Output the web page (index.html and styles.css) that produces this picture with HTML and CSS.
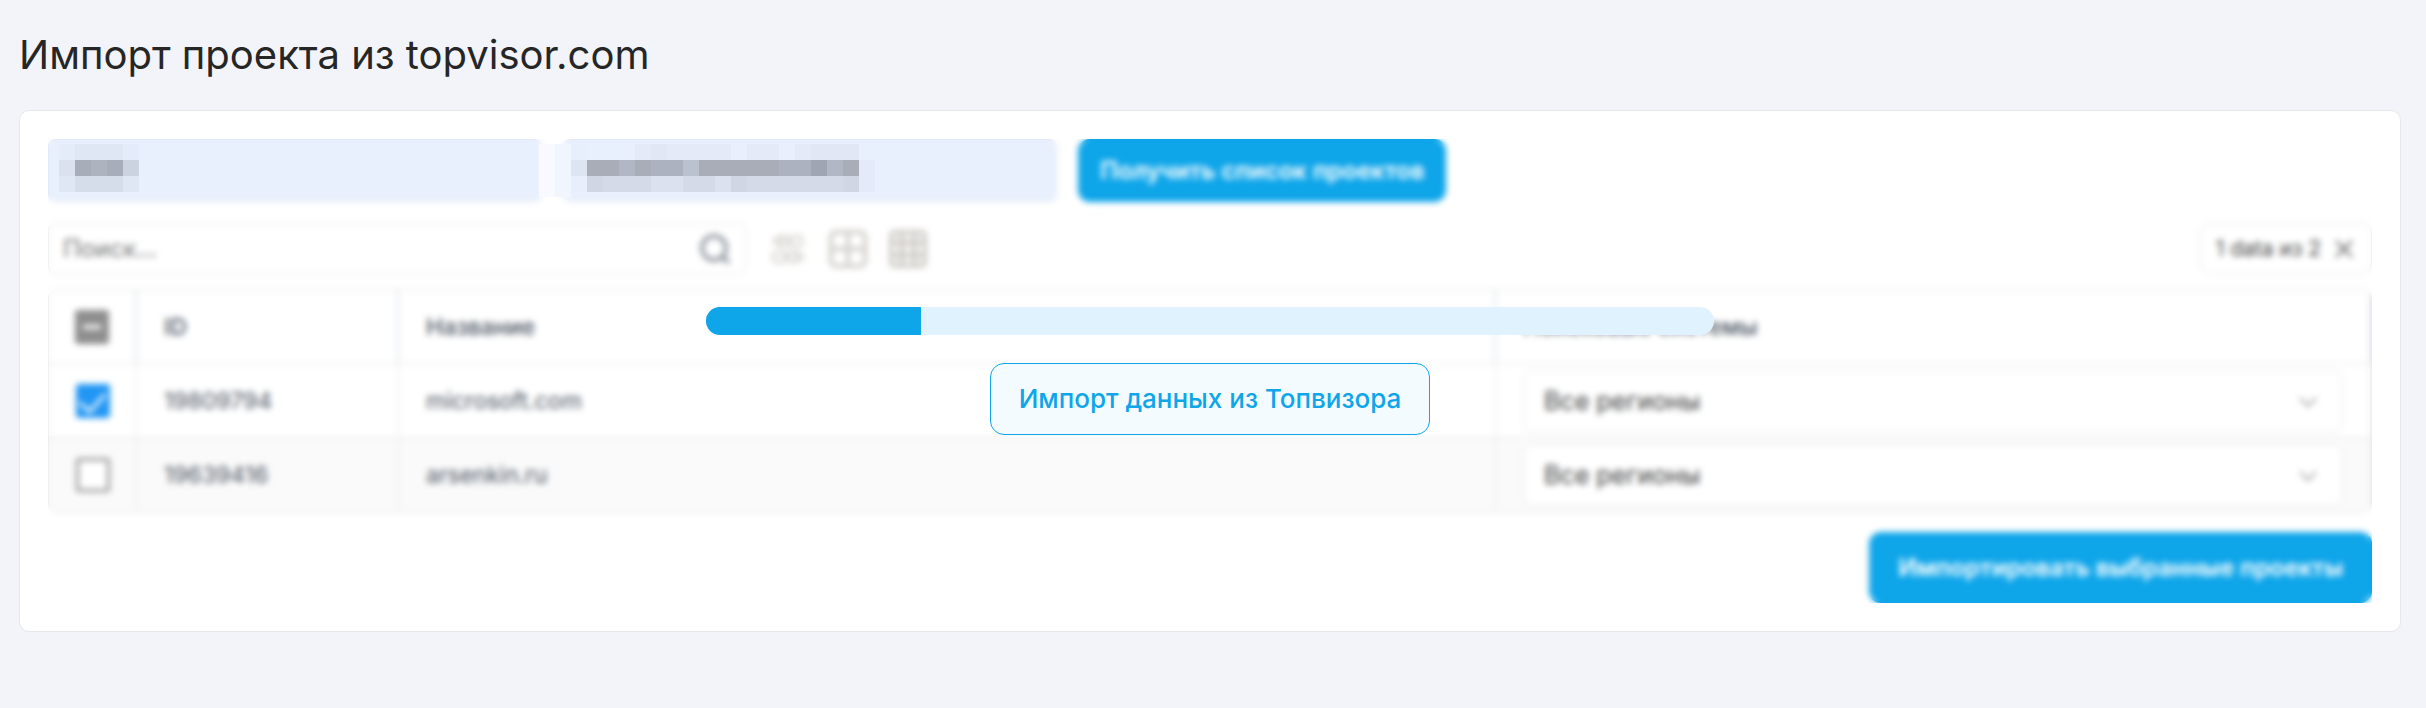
FILE: index.html
```html
<!DOCTYPE html>
<html lang="ru">
<head>
    <meta charset="UTF-8">
    <meta name="viewport" content="width=device-width, initial-scale=1.0">
    <title>Импорт проекта</title>
    <link rel="stylesheet" href="styles.css">
</head>
<body>
    <h1>Импорт проекта из topvisor.com</h1>

    <main class="card">
        <div class="content">
            <form class="access">
                <input type="text" class="field" aria-label="ID пользователя">
                <input type="text" class="field" aria-label="API ключ">
                <button type="button" class="btn">Получить список проектов</button>
            </form>

            <div class="toolbar">
                <div class="search">
                    <input type="text" placeholder="Поиск..." aria-label="Поиск">
                    <svg width="32" height="32" viewBox="0 0 32 32" fill="none" stroke="#9299a3" stroke-width="4"><circle cx="15" cy="15" r="12"/><path d="M23 23l7 7"/></svg>
                </div>
                <button type="button" class="icon" aria-label="Список">
                    <svg width="38" height="38" viewBox="0 0 38 38" fill="none" stroke="#d8d5d0" stroke-width="3"><path d="M11 6l-6 5 6 5M28 22l6 5-6 5"/><rect x="12" y="6" width="7" height="10" rx="3"/><rect x="22" y="6" width="11" height="10" rx="4"/><rect x="4" y="22" width="12" height="10" rx="4"/><rect x="19" y="22" width="8" height="10" rx="3"/></svg>
                </button>
                <button type="button" class="icon" aria-label="Крупная сетка">
                    <svg width="38" height="38" viewBox="0 0 38 38" fill="none" stroke="#d0cdc8" stroke-width="4"><rect x="2" y="2" width="34" height="34" rx="5"/><path d="M19 2v34M2 19h34"/></svg>
                </button>
                <button type="button" class="icon" aria-label="Мелкая сетка">
                    <svg width="38" height="38" viewBox="0 0 38 38" fill="none" stroke="#d0cdc8" stroke-width="5"><rect x="2" y="2" width="34" height="34" rx="5"/><path d="M13 2v34M25 2v34M2 13h34M2 25h34"/></svg>
                </button>
                <button type="button" class="counter">
                    1 data из 2
                    <svg width="18" height="18" viewBox="0 0 18 18" stroke="#555" stroke-width="2"><path d="M1 1l16 16M17 1L1 17"/></svg>
                </button>
            </div>

            <div class="table-wrap">
                <table>
                    <colgroup>
                        <col class="col-check">
                        <col class="col-id">
                        <col class="col-name">
                        <col>
                    </colgroup>
                    <thead>
                        <tr>
                            <th class="check"><input type="checkbox" class="partial" aria-label="Выбрать все"></th>
                            <th>ID</th>
                            <th>Название</th>
                            <th>Поисковые системы</th>
                        </tr>
                    </thead>
                    <tbody>
                        <tr>
                            <td class="check"><input type="checkbox" checked aria-label="microsoft.com"></td>
                            <td>19809794</td>
                            <td>microsoft.com</td>
                            <td>
                                <div class="select">
                                    <select aria-label="Регионы microsoft.com"><option>Все регионы</option></select>
                                    <svg width="18" height="12" viewBox="0 0 18 12" fill="none" stroke="#a0a0a0" stroke-width="2"><path d="M1 2l8 8 8-8"/></svg>
                                </div>
                            </td>
                        </tr>
                        <tr>
                            <td class="check"><input type="checkbox" aria-label="arsenkin.ru"></td>
                            <td>19639416</td>
                            <td>arsenkin.ru</td>
                            <td>
                                <div class="select">
                                    <select aria-label="Регионы arsenkin.ru"><option>Все регионы</option></select>
                                    <svg width="18" height="12" viewBox="0 0 18 12" fill="none" stroke="#a0a0a0" stroke-width="2"><path d="M1 2l8 8 8-8"/></svg>
                                </div>
                            </td>
                        </tr>
                    </tbody>
                </table>
            </div>

            <button type="button" class="btn btn-import">Импортировать выбранные проекты</button>

            <!-- Loading overlay -->
            <div class="overlay">
                <div class="progress"><div class="progress-bar" style="width: 21.3%"></div></div>
                <div class="status">Импорт данных из Топвизора</div>
            </div>

            <!-- Hidden credentials -->
            <svg class="mask" width="832" height="56" viewBox="0 0 832 56" shape-rendering="crispEdges" aria-hidden="true">
                <path fill="#e4ecfa" d="M11 0h16v16H11z"/>
                <path fill="#e0e7f4" d="M11 32h16v16H11zM75 32h16v16H75z"/>
                <path fill="#dfe6f4" d="M27 0h48v16H27z"/>
                <path fill="#e4ebfa" d="M75 0h16v16H75z"/>
                <path fill="#dbe2ef" d="M11 16h16v16H11z"/>
                <path fill="#a7adb9" d="M27 16h48v16H27z"/>
                <path fill="#adb3bf" d="M43 16h16v16H43z"/>
                <path fill="#cbd2e0" d="M75 16h16v16H75z"/>
                <path fill="#d6ddea" d="M27 32h48v16H27z"/>
                <path fill="#f8faff" d="M491 0h16v53h-16z"/>
                <path fill="#f1f5fe" d="M507 0h16v53h-16z"/>
                <path fill="#e7eefc" d="M523 0h16v48h-16z"/>
                <path fill="#dee5f2" d="M523 16h16v16h-16z"/>
                <path fill="#e4eaf8" d="M587 0h96v16h-96zM699 0h32v16h-32zM747 0h64v16h-64z"/>
                <path fill="#e1e7f5" d="M763 0h48v16h-48zM603 0h16v16h-16z"/>
                <path fill="#a8adb8" d="M539 16h272v16H539z"/>
                <path fill="#b1b7c4" d="M571 16h16v16h-16zM779 16h16v16h-16z"/>
                <path fill="#bbc2cf" d="M635 16h16v16h-16z"/>
                <path fill="#acb2bf" d="M603 16h32v16h-32zM731 16h32v16h-32z"/>
                <path fill="#a0a6b1" d="M763 16h16v16h-16z"/>
                <path fill="#d4dae7" d="M539 32h272v16H539z"/>
                <path fill="#dbe1ef" d="M603 32h32v16h-32zM667 32h16v16h-16z"/>
                <path fill="#d0d6e3" d="M539 32h16v16h-16zM683 32h16v16h-16zM795 32h16v16h-16z"/>
                <path fill="#e4eafa" d="M811 16h16v32h-16z"/>
            </svg>
        </div>
    </main>
</body>
</html>
```

FILE: styles.css
```css
* {
    margin: 0;
    padding: 0;
    box-sizing: border-box;
    font-family: Inter, sans-serif;
}
body {
    background: #f3f4fa;
    padding: 28px 25px 28px 19px;
    color: #262626;
    font-size: 24px;
}
h1 {
    font-size: 40px;
    font-weight: 400;
    line-height: 54px;
    margin-bottom: 28px;
}

/* Card */
.card {
    background: #fff;
    border: 1px solid #e5e7eb;
    border-radius: 10px;
    padding: 28px;
}
.content {
    position: relative;
    display: flex;
    flex-direction: column;
}

/* Access form */
.access {
    display: flex;
    gap: 21px;
    margin-bottom: 21px;
}
.field {
    width: 494px;
    height: 63px;
    padding: 0 20px;
    background: #e8f0fe;
    border: 1px solid #e0e4ec;
    border-radius: 8px;
    font-size: 24px;
}
.btn {
    height: 63px;
    padding: 0 22px;
    background: #0ea5e9;
    border: none;
    border-radius: 12px;
    color: #fff;
    font-size: 24px;
    font-weight: 600;
    cursor: pointer;
}
.btn-import {
    align-self: flex-end;
    height: 71px;
    padding: 0 29px;
}

/* Toolbar */
.toolbar {
    display: flex;
    align-items: center;
    gap: 22px;
    margin-bottom: 15px;
}
.search {
    position: relative;
    width: 699px;
}
.search input {
    display: block;
    width: 100%;
    height: 51px;
    padding: 0 14px;
    border: 1px solid #e5e5e5;
    border-radius: 8px;
    font-size: 24px;
}
.search input::placeholder {
    color: #757575;
}
.search svg {
    position: absolute;
    top: 10px;
    right: 16px;
}
.icon {
    display: flex;
    background: none;
    border: none;
    cursor: pointer;
}
.counter {
    display: flex;
    align-items: center;
    gap: 14px;
    height: 51px;
    margin-left: auto;
    padding: 0 18px 0 15px;
    background: #fff;
    border: 1px solid #e5e5e5;
    border-radius: 10px;
    color: #444;
    font-size: 21px;
}

/* Projects table */
.table-wrap {
    margin-bottom: 19px;
    border: 1px solid #e5e5e5;
    border-radius: 10px;
    overflow: hidden;
}
table {
    width: 100%;
    border-collapse: separate;
    border-spacing: 0;
    table-layout: fixed;
}
.col-check {
    width: 88px;
}
.col-id {
    width: 262px;
}
.col-name {
    width: 1097px;
}
th,
td {
    height: 74px;
    padding: 0 27px;
    border-right: 1px solid #e5e5e5;
    color: #4b5563;
    font-size: 23px;
    font-weight: 400;
    text-align: left;
}
th {
    border-right: 2px solid #dfe4ea;
    border-bottom: 1px solid #e5e5e5;
    font-weight: 500;
}
tbody tr:nth-child(even) {
    background: #fafafa;
}
tbody tr:first-child td {
    border-bottom: 1px solid #e5e5e5;
}
th.check,
td.check {
    padding: 0;
}
input[type="checkbox"] {
    display: block;
    width: 34px;
    height: 34px;
    margin: 0 auto;
    appearance: none;
    background: #fff;
    border: 3px solid #949494;
    border-radius: 3px;
}
input[type="checkbox"]:checked {
    background: #2196f3;
    border-color: #2196f3;
}
input[type="checkbox"]:checked::after {
    content: "";
    display: block;
    width: 12px;
    height: 22px;
    margin: 0 auto;
    border: solid #fff;
    border-width: 0 3px 3px 0;
    transform: rotate(42deg);
}
input[type="checkbox"].partial {
    background: #8e8e8e;
    border-color: #8e8e8e;
}
input[type="checkbox"].partial::after {
    content: "";
    display: block;
    width: 18px;
    height: 4px;
    margin: 12px auto;
    background: #fff;
}
.select {
    position: relative;
}
.select select {
    display: block;
    width: 100%;
    height: 62px;
    padding: 0 20px;
    appearance: none;
    background: #fff;
    border: 1px solid #e5e5e5;
    border-radius: 10px;
    color: #404040;
    font-size: 25px;
}
.select svg {
    position: absolute;
    top: 26px;
    right: 26px;
}

/* Loading overlay */
.overlay {
    position: absolute;
    inset: 0;
    display: flex;
    flex-direction: column;
    align-items: center;
    justify-content: center;
    gap: 28px;
    backdrop-filter: blur(3px);
}
.progress {
    width: 1008px;
    max-width: 100%;
    height: 28px;
    background: #e0f2fe;
    border-radius: 14px;
    overflow: hidden;
}
.progress-bar {
    height: 100%;
    background: #0ea5e9;
}
.status {
    padding: 20px 28px;
    background: #f3fbff;
    border: 1px solid #0ea5e9;
    border-radius: 14px;
    color: #0ea5e9;
    font-size: 26px;
    font-weight: 500;
    line-height: 30px;
}
.mask {
    position: absolute;
    top: 5px;
    left: 0;
}
```
